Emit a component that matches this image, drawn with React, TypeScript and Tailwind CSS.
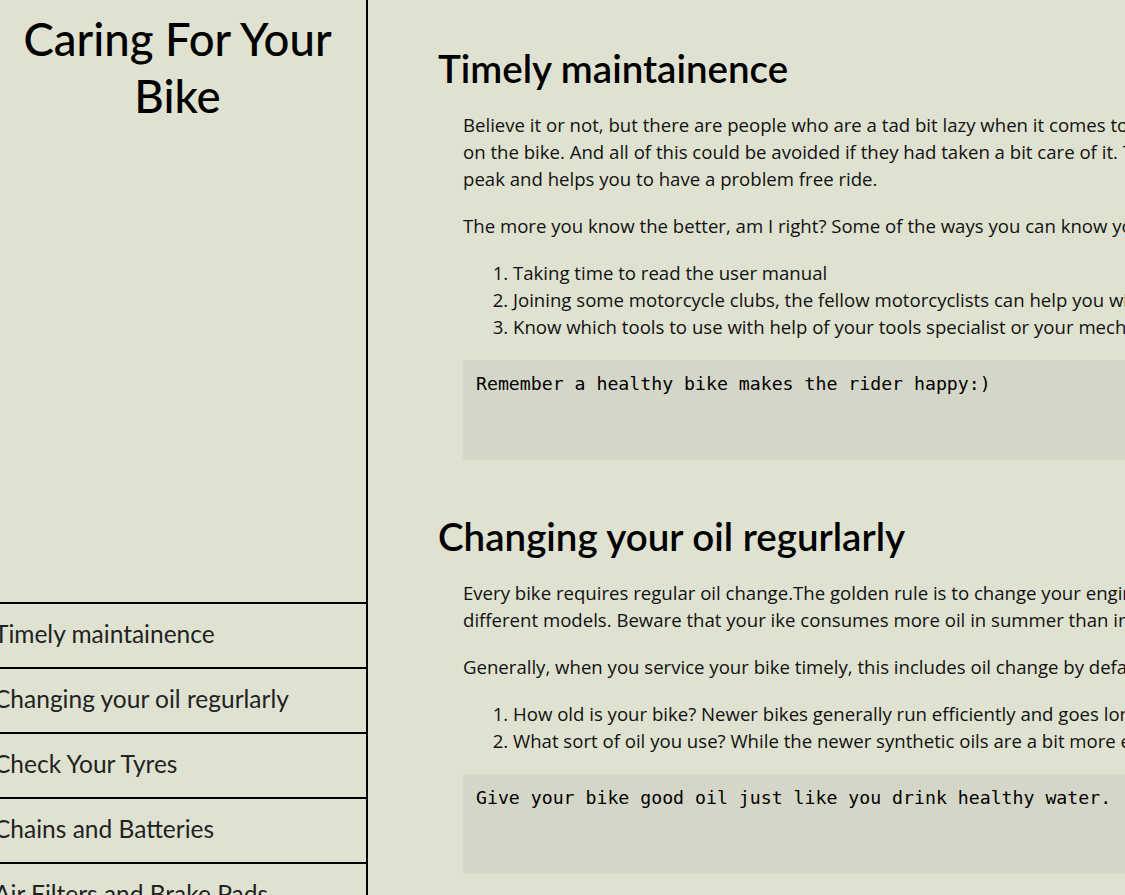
import React from 'react';

const navItems = [
    'Timely maintainence',
    'Changing your oil regurlarly',
    'Check Your Tyres',
    'Chains and Batteries',
    'Air Filters and Brake Pads',
];

const Section = ({ title, children }: { title: string; children: React.ReactNode }) => (
    <section className="mb-[53px]">
        <h2 className="text-[38.5px] leading-[46px] font-semibold text-black mb-[20px] font-['Lato',sans-serif]">{title}</h2>
        <div className="pl-[25px]">{children}</div>
    </section>
);

const Code = ({ text }: { text: string }) => (
    <code className="block h-[100px] bg-[#d4d6c7] pt-[13px] pl-[13px] text-[18.2px] leading-[22px] text-black font-['DejaVu_Sans_Mono',monospace]">
        {text}
    </code>
);

const App = () => {
    return (
        <div className="flex h-[895px] w-[1125px] overflow-hidden bg-[#dfe2d0] font-['Lato',sans-serif] text-[#111]">
            {/* Sidebar */}
            <nav className="w-[368px] shrink-0 border-r-2 border-black">
                <header className="h-[602px] pt-[10px] pr-[11px]">
                    <h1 className="text-center text-[45.5px] leading-[57px] font-medium text-black">
                        Caring For Your
                        <br />
                        Bike
                    </h1>
                </header>
                <ul>
                    {navItems.map((item) => (
                        <li key={item} className="border-t-2 border-black">
                            <a href="#" className="block h-[63px] leading-[60px] -ml-[6px] text-[24.5px] text-[#222] whitespace-nowrap">
                                {item}
                            </a>
                        </li>
                    ))}
                </ul>
            </nav>

            {/* Main content */}
            <main className="pl-[70px] pt-[45px] whitespace-nowrap text-[18.6px] leading-[27px] font-['Open_Sans',sans-serif]">
                <Section title="Timely maintainence">
                    <p className="mb-[20px]">
                        Believe it or not, but there are people who are a tad bit lazy when it comes to maintaining their bikes, which leads to sudden breakdowns
                        <br />
                        on the bike. And all of this could be avoided if they had taken a bit care of it. Timely maintainence keeps the performance of the bike at its
                        <br />
                        peak and helps you to have a problem free ride.
                    </p>
                    <p className="mb-[20px]">The more you know the better, am I right? Some of the ways you can know your bike better are:</p>
                    <ol className="list-decimal pl-[50px] mb-[20px]">
                        <li>Taking time to read the user manual</li>
                        <li>Joining some motorcycle clubs, the fellow motorcyclists can help you with their experience</li>
                        <li>Know which tools to use with help of your tools specialist or your mechanic</li>
                    </ol>
                    <Code text="Remember a healthy bike makes the rider happy:)" />
                </Section>

                <Section title="Changing your oil regurlarly">
                    <p className="mb-[20px]">
                        Every bike requires regular oil change.The golden rule is to change your engine oil every 3000 kms, however this may vary for
                        <br />
                        different models. Beware that your ike consumes more oil in summer than in winter.
                    </p>
                    <p className="mb-[20px]">Generally, when you service your bike timely, this includes oil change by default. But keep in mind:</p>
                    <ol className="list-decimal pl-[50px] mb-[20px]">
                        <li>How old is your bike? Newer bikes generally run efficiently and goes longer without an oil change</li>
                        <li>What sort of oil you use? While the newer synthetic oils are a bit more expensive, they last longer</li>
                    </ol>
                    <Code text="Give your bike good oil just like you drink healthy water." />
                </Section>
            </main>
        </div>
    );
};

export default App;
